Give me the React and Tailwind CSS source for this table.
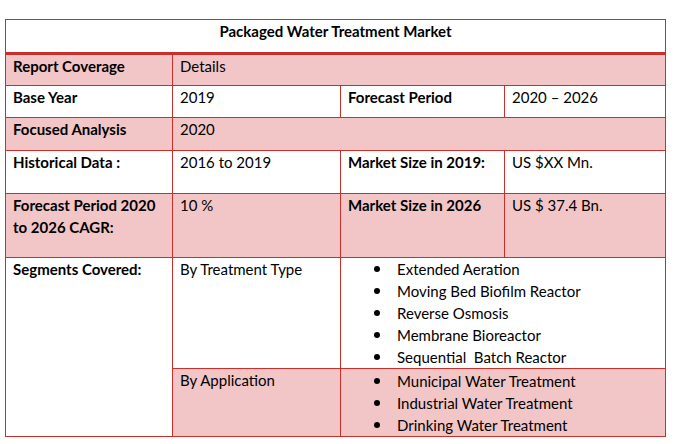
import React from "react";

const B = "border border-[#c9302c]";
const pink = "bg-[#f2c6c7]";

function Bullets({ items }) {
  return (
    <ul className="m-0 p-0 list-none">
      {items.map((t) => (
        <li key={t} className="flex items-center h-[22px]">
          <span className="ml-[33px] w-[6px] h-[6px] rounded-full bg-black shrink-0" />
          <span className="ml-[17px] whitespace-pre">{t}</span>
        </li>
      ))}
    </ul>
  );
}

export default function App() {
  const cell = `${B} align-top pl-[7px] pr-[6px] pt-0 leading-[22px]`;
  return (
    <div
      className="w-[680px] h-[444px] bg-white pt-[19px] pl-[5px] text-black text-[15px]"
      style={{ fontFamily: "Lato, 'Open Sans', sans-serif" }}
    >
      <table className="border-collapse table-fixed w-[660px]">
        <colgroup>
          <col className="w-[167px]" />
          <col className="w-[168px]" />
          <col className="w-[164px]" />
          <col className="w-[161px]" />
        </colgroup>
        <tbody>
          <tr className="h-[34px]">
            <td colSpan={4} className={`${B} border-b-[3px] align-top text-center font-bold leading-[22px]`}>
              Packaged Water Treatment Market
            </td>
          </tr>
          <tr className={`h-[32px] ${pink}`}>
            <td className={`${cell} font-bold`}>Report Coverage</td>
            <td colSpan={3} className={cell}>Details</td>
          </tr>
          <tr className="h-[32px]">
            <td className={`${cell} font-bold`}>Base Year</td>
            <td className={cell}>2019</td>
            <td className={`${cell} font-bold`}>Forecast Period</td>
            <td className={cell}>2020 – 2026</td>
          </tr>
          <tr className={`h-[33px] ${pink}`}>
            <td className={`${cell} font-bold`}>Focused Analysis</td>
            <td colSpan={3} className={cell}>2020</td>
          </tr>
          <tr className="h-[43px]">
            <td className={`${cell} font-bold`}>Historical Data :</td>
            <td className={cell}>2016 to 2019</td>
            <td className={`${cell} font-bold`}>Market Size in 2019:</td>
            <td className={cell}>US $XX Mn.</td>
          </tr>
          <tr className={`h-[64px] ${pink}`}>
            <td className={`${cell} font-bold`}>
              Forecast Period 2020
              <br />
              to 2026 CAGR:
            </td>
            <td className={cell}>10 %</td>
            <td className={`${cell} font-bold`}>Market Size in 2026</td>
            <td className={cell}>US $ 37.4 Bn.</td>
          </tr>
          <tr className="h-[111px]">
            <td rowSpan={2} className={`${cell} font-bold`}>Segments Covered:</td>
            <td className={cell}>By Treatment Type</td>
            <td colSpan={2} className={`${B} align-top p-0 leading-[22px]`}>
              <Bullets
                items={[
                  "Extended Aeration",
                  "Moving Bed Biofilm Reactor",
                  "Reverse Osmosis",
                  "Membrane Bioreactor",
                  "Sequential  Batch Reactor",
                ]}
              />
            </td>
          </tr>
          <tr className="h-[67px]">
            <td className={`${cell} ${pink}`}>By Application</td>
            <td colSpan={2} className={`${B} ${pink} align-top p-0 pt-[1px] leading-[22px]`}>
              <Bullets
                items={[
                  "Municipal Water Treatment",
                  "Industrial Water Treatment",
                  "Drinking Water Treatment",
                ]}
              />
            </td>
          </tr>
        </tbody>
      </table>
    </div>
  );
}
